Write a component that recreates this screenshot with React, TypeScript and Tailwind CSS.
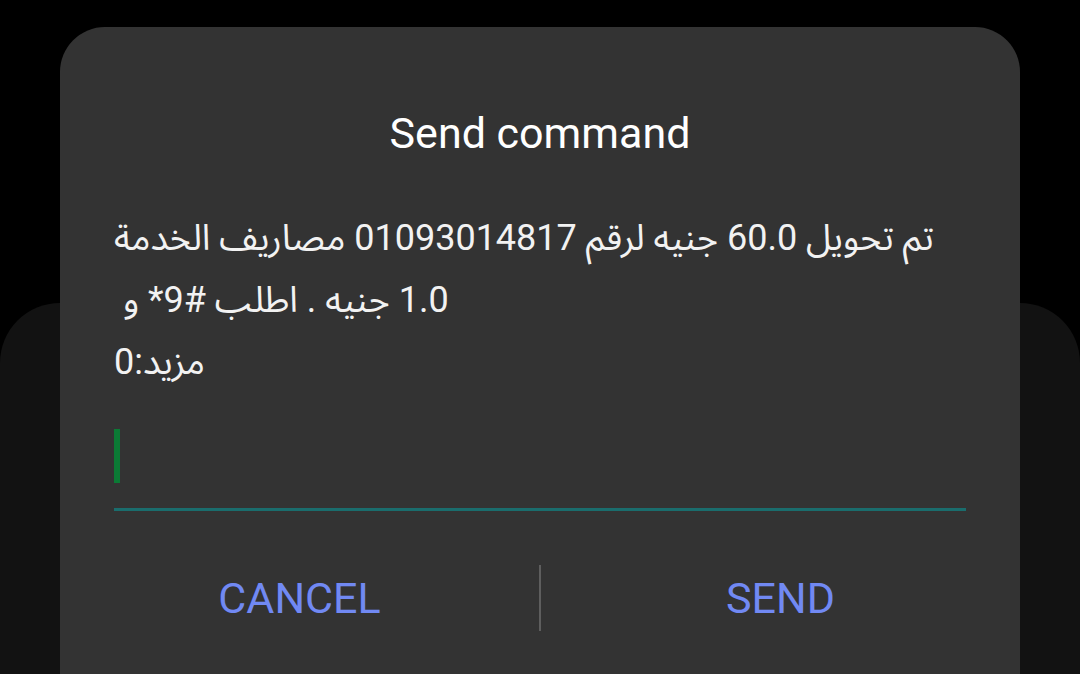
export default function App() {
    const font = { fontFamily: 'Roboto, "Noto Sans Arabic", "DejaVu Sans", sans-serif' };

    return (
        <div className="relative w-[1080px] h-[674px] bg-black overflow-hidden" style={font}>
            {/* card behind the dialog */}
            <div className="absolute left-0 top-[303px] w-[1080px] h-[500px] rounded-[60px] bg-[#121212]" />

            {/* dialog */}
            <div className="relative ml-[60px] mt-[27px] w-[960px] h-[700px] rounded-[45px] bg-[#333333] px-[54px] pt-[81px]">
                <h2 className="text-center text-[43px] leading-[50px] text-white font-normal">
                    Send command
                </h2>

                <div className="mt-[49px] flex flex-col text-[36px] leading-[62px] text-[#f2f2f2]">
                    <p dir="rtl" className="text-left whitespace-nowrap">
                        تم تحويل 60.0 جنيه لرقم 01093014817 مصاريف الخدمة
                    </p>
                    <p dir="rtl" className="text-left whitespace-nowrap">
                        1.0 جنيه . اطلب #9* و{'\u00A0'}
                    </p>
                    <p dir="rtl" className="text-left whitespace-nowrap">
                        مزيد:0
                    </p>
                </div>

                {/* input field */}
                <div className="mt-[36px]">
                    <div className="w-[6px] h-[54px] bg-[#0b7a35]" />
                    <div className="mt-[25px] h-[3px] bg-[#1a6d6d]" />
                </div>

                {/* buttons */}
                <div className="-mx-[54px] mt-[54px] flex items-center h-[66px]">
                    <button className="flex-1 text-[43px] leading-[66px] text-[#7189f3]">CANCEL</button>
                    <div className="w-[2px] h-[66px] bg-[#5e5e5e]" />
                    <button className="flex-1 text-[43px] leading-[66px] text-[#7189f3]">SEND</button>
                </div>
            </div>
        </div>
    );
}
